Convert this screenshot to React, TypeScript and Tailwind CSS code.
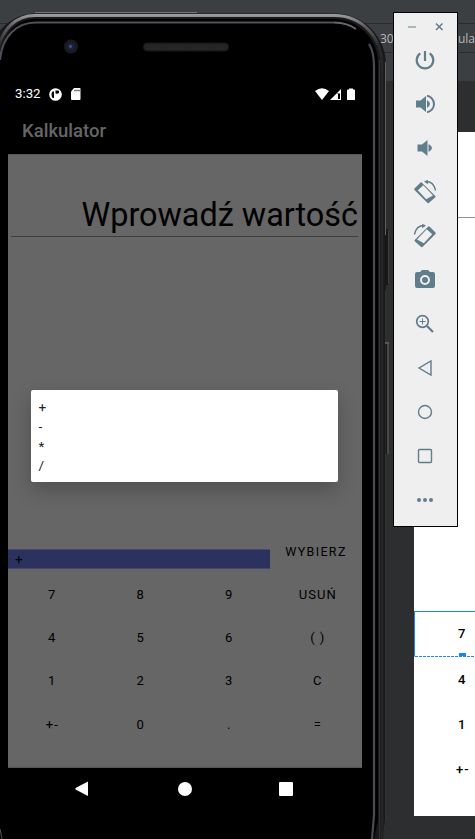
import React from "react";

const KEYS = ["7", "8", "9", "USUŃ", "4", "5", "6", "( )", "1", "2", "3", "C", "+-", "0", ".", "="];
const OPERATORS = ["+", "-", "*", "/"];

function Editor() {
  return (
    <div className="flex h-[839px] w-full flex-col bg-[#2d2e30]">
      <div className="h-[23px] shrink-0 bg-[#3c3f41]" />
      <div className="flex h-[30px] shrink-0 items-center border-y border-[#292b2d] bg-[#3c3f41] pl-[380px] pt-px font-['Open_Sans',sans-serif] text-[12px] text-[#b4b6b8]">
        <span className="w-[75px]">30</span>
        <span>cula</span>
      </div>
      <div className="h-[28px] shrink-0 bg-[#3c3f41]" />
      <div className="ml-[414px] mt-[51px] flex h-[684px] flex-col bg-white">
        <div className="h-[86px] shrink-0 border-b border-[#929292]" />
        <div className="h-[393px] shrink-0" />
        <div className="flex flex-col font-[Roboto,sans-serif] text-[13px] font-medium tracking-[1px] text-black">
          <div className="relative flex h-[46px] items-center border-b border-l border-t border-[#1886f7] border-b-transparent pl-[43px]">
            7
            <svg className="absolute bottom-[-1px] left-0" width="61" height="5">
              <path d="M0 4.5H61" stroke="#1886f7" strokeDasharray="3 1" />
              <path d="M44 1h7v3h-7z" fill="#1886f7" />
            </svg>
          </div>
          <div className="flex h-[45px] items-center pl-[44px]">4</div>
          <div className="flex h-[45px] items-center pl-[44px]">1</div>
          <div className="flex h-[45px] items-center pl-[42px]">+-</div>
        </div>
      </div>
    </div>
  );
}

/* Glass, metal rim, camera and speaker of the handset */
function Handset() {
  return (
    <svg className="absolute left-0 top-0" width="393" height="839" viewBox="0 0 393 839" fill="none">
      <defs>
        <linearGradient id="rim" x1="0" y1="13" x2="0" y2="80" gradientUnits="userSpaceOnUse">
          <stop offset="0" stopColor="#a5a3a8" />
          <stop offset="0.2" stopColor="#605e61" />
          <stop offset="0.5" stopColor="#292929" />
          <stop offset="1" stopColor="#242424" />
        </linearGradient>
      </defs>
      <path d="M35 12.5H197" stroke="#737373" />
      <path d="M-10 839V58C-10 34 11 13.500 35 13.500H334C363 13.500 386 36 386 65V820L383 839Z" fill="#19191a" />
      <path d="M385.500 62V235" stroke="#625e5d" />
      <path d="M385.500 290V820L383 839" stroke="#343334" />
      <path d="M-2 50C2 29 16 15.500 35 15.500H334C362 15.500 382 37 382 66V839" stroke="url(#rim)" strokeWidth="3" />
      <path d="M379.500 60V839" stroke="#323233" />
      <path d="M0 839V54C4 34 16 19 35 19H334C358 19 378 39 378 63V820L374 839H0Z" fill="#000" />
      <path d="M0 60C2 36 17 22.500 36 22.500H334" stroke="#50505a" strokeWidth="2" />
      <path d="M334 22.500Q348 23 356 29" stroke="#66666c" strokeWidth="2" />
      <path d="M369 44Q374 52 374 66V815L372 839" stroke="#4a4a52" strokeWidth="2.200" />
      <path d="M0 829L2 839" stroke="#555" />
      <circle cx="71" cy="46.500" r="7" fill="#1b1b1d" />
      <circle cx="71" cy="46.500" r="3.700" fill="#182344" />
      <circle cx="70.500" cy="46.500" r="1.400" fill="#445690" />
      <rect x="143.500" y="43" width="85" height="8" rx="3.500" fill="#242424" stroke="#171717" />
      <path d="M147 46h78M147 48.500h78" stroke="#303030" strokeDasharray="1 2" />
      <path d="M387.500 229V285" stroke="#171717" strokeWidth="3" />
      <path d="M388.500 230V284" stroke="#3d3d3d" />
      <path d="M386.500 343V454" stroke="#191919" strokeWidth="2" />
      <path d="M388 344V454" stroke="#505050" strokeWidth="1.600" />
      <path d="M385 343h4" stroke="#898989" />
    </svg>
  );
}

function Phone() {
  return (
    <div className="absolute left-0 top-0 h-[839px] w-[393px] font-[Roboto,sans-serif]">
      <Handset />
      <div className="relative ml-[8px] flex w-[354px] flex-col pt-[80px]">
        <div className="flex h-[28px] items-center pl-[7px] pr-[7px] text-white">
          <span className="w-[25px] text-[13.250px]">3:32</span>
          <svg className="ml-[9px]" width="13" height="13" viewBox="0 0 13 13">
            <circle cx="6.500" cy="6.500" r="6.300" fill="#fff" />
            <path d="M3.500 3.500h1.500v6.500H3.800Q2.500 9 2.500 6.500Q2.500 4.500 3.500 3.500ZM6.500 2.500h3Q10.500 3.500 10 4.800Q9 6 6.500 5.500Z" fill="#000" />
          </svg>
          <svg className="ml-[9px]" width="10" height="12" viewBox="0 0 10 12">
            <path d="M3 0H9Q9.500 0 9.500 1V11Q9.500 12 8.500 12H1Q0 12 0 11V3.500Z" fill="#fff" />
            <path d="M3.500 2.500h1M5.500 2.500h1M7.500 2.500h1" stroke="#000" strokeWidth="1.500" />
          </svg>
          <svg className="ml-auto" width="40" height="13" viewBox="0 0 40 13" fill="#fff">
            <path d="M0 3Q7 -2.500 14 3L7 12Z" />
            <path fillRule="evenodd" d="M15 12L26 1V12ZM22 6V11H25V5.500H22Z" />
            <path d="M22 6H23V11H22Z" />
            <path d="M32 2Q32 1.500 33 1.500H34V0.500H38V1.500H39Q40 1.500 40 2V11.500Q40 12 39 12H33Q32 12 32 11.500Z" />
          </svg>
        </div>
        <div className="flex h-[46px] items-center pl-[14px] pt-[2px] text-[18.500px] font-medium text-[#666]">Kalkulator</div>
        <div className="relative flex h-[614px] flex-col overflow-hidden border-y border-[#555] bg-[#666] text-black">
          <div className="ml-[3px] mr-[4px] flex h-[82px] shrink-0 items-end justify-end border-b border-[#3e3e3e] pb-px text-[32.400px] leading-[40px]">
            <span className="whitespace-nowrap">Wprowadź wartość</span>
          </div>
          <div className="h-[294px] shrink-0" />
          <div className="flex h-[42px] shrink-0 items-center text-[12.500px]">
            <div className="mt-[13px] flex h-[20px] w-[262px] items-center border-y border-[#47476d] bg-[#2c325e] pl-[7px] pt-[2px] text-[13.500px]">+</div>
            <div className="flex-1 text-center tracking-[1.350px]">WYBIERZ</div>
          </div>
          <div className="grid grid-cols-4 text-[13px] tracking-[1px]">
            {KEYS.map((key) => (
              <div key={key} className="flex h-[43.300px] items-center justify-center">{key}</div>
            ))}
          </div>
          <div className="absolute left-[23px] top-[235px] flex h-[92px] w-[307px] flex-col rounded-[2px] bg-white pl-[7.500px] pt-[8px] text-[13.500px] leading-[19.300px] text-[#222] shadow-[0_8px_20px_rgba(0,0,0,0.22)]">
            {OPERATORS.map((op) => <div key={op}>{op}</div>)}
          </div>
        </div>
        <div className="flex h-[42px] items-center text-white">
          <svg className="ml-[67px]" width="14" height="16" viewBox="0 0 14 16" fill="currentColor"><path d="M13 0.500V15L0.500 8.500V7Z" /></svg>
          <div className="ml-[89px] size-[14px] rounded-full bg-white" />
          <div className="ml-[87px] size-[14px] rounded-[1px] bg-white" />
        </div>
      </div>
    </div>
  );
}

function RotateDevice({ mirrored = false }: { mirrored?: boolean }) {
  return (
    <g transform={mirrored ? "translate(24 0) scale(-1 1)" : undefined}>
      <path fillRule="evenodd" d="M1.500 8.500L7.500 2.500Q8.300 2 9 2.700L22.300 16Q22.900 16.700 22.300 17.300L15.800 23Q15 23.500 14.300 22.800L1.500 10Q0.900 9.200 1.500 8.500ZM4.800 10.200L13.200 19.200L20 15.400L10.300 5.200Z" />
      <path d="M12 1.600Q20.500 1 22.600 10.500" fill="none" stroke="currentColor" strokeWidth="1.400" />
      <path d="M11 1.500L15 0V4.200Z" />
    </g>
  );
}

const SPEAKER = <path d="M3 8.500H7.500L13 4V20L7.500 15.500H3Z" />;

const TOOLS: React.ReactNode[] = [
  <g fill="none" stroke="currentColor" strokeWidth="2.200"><path d="M12 3v10M7.300 5.300A8.300 8.300 0 1 0 16.700 5.300" /></g>,
  <>{SPEAKER}<path d="M14 8Q17 10 17 12Q17 14 14 16Z" /><path d="M14 3.800A8.300 8.300 0 0 1 14 20.200" fill="none" stroke="currentColor" strokeWidth="2" /></>,
  <g transform="translate(1.500 0)">{SPEAKER}<path d="M14 8Q17.500 10 17.500 12Q17.500 14 14 16Z" /></g>,
  <RotateDevice />,
  <RotateDevice mirrored />,
  <path fillRule="evenodd" d="M4 4H7L9 2H15L17 4H20Q22 4 22 6V18Q22 20 20 20H4Q2 20 2 18V6Q2 4 4 4ZM12 7A5 5 0 1 0 12 17A5 5 0 1 0 12 7ZM12 9A3 3 0 1 1 12 15A3 3 0 1 1 12 9Z" />,
  <g fill="none" stroke="currentColor"><circle cx="9.500" cy="9.500" r="5.800" strokeWidth="1.700" /><path d="M14 14L20 20" strokeWidth="2.200" /><path d="M9.500 6.500v6M6.500 9.500h6" /></g>,
  <path d="M18 5V19L6 12Z" fill="none" stroke="currentColor" strokeWidth="1.400" />,
  <circle cx="12" cy="12" r="6.500" fill="none" stroke="currentColor" strokeWidth="1.400" />,
  <rect x="5.500" y="5.500" width="13" height="13" rx="1" fill="none" stroke="currentColor" strokeWidth="1.400" />,
  <><circle cx="6" cy="12" r="2" /><circle cx="12" cy="12" r="2" /><circle cx="18" cy="12" r="2" /></>,
];

function EmulatorToolbar() {
  return (
    <div className="absolute left-[393px] top-[12px] flex h-[515px] w-[65px] flex-col items-start border border-black bg-[#efefef] text-[#607d8b]">
      <svg className="h-[25px] w-[63px] shrink-0" viewBox="0 0 63 25" fill="none" stroke="currentColor">
        <path d="M14 14H22" stroke="#90a4ae" strokeWidth="1.500" />
        <path d="M42 10.500L48.500 17M48.500 10.500L42 17" strokeWidth="1.500" />
      </svg>
      {TOOLS.map((tool, index) => (
        <div key={index} className="flex h-[44px] items-center pl-[19px]">
          <svg width="24" height="24" viewBox="0 0 24 24" fill="currentColor">{tool}</svg>
        </div>
      ))}
    </div>
  );
}

export default function App() {
  return (
    <main className="relative h-[839px] w-[475px] overflow-hidden">
      <Editor />
      <Phone />
      <EmulatorToolbar />
    </main>
  );
}
